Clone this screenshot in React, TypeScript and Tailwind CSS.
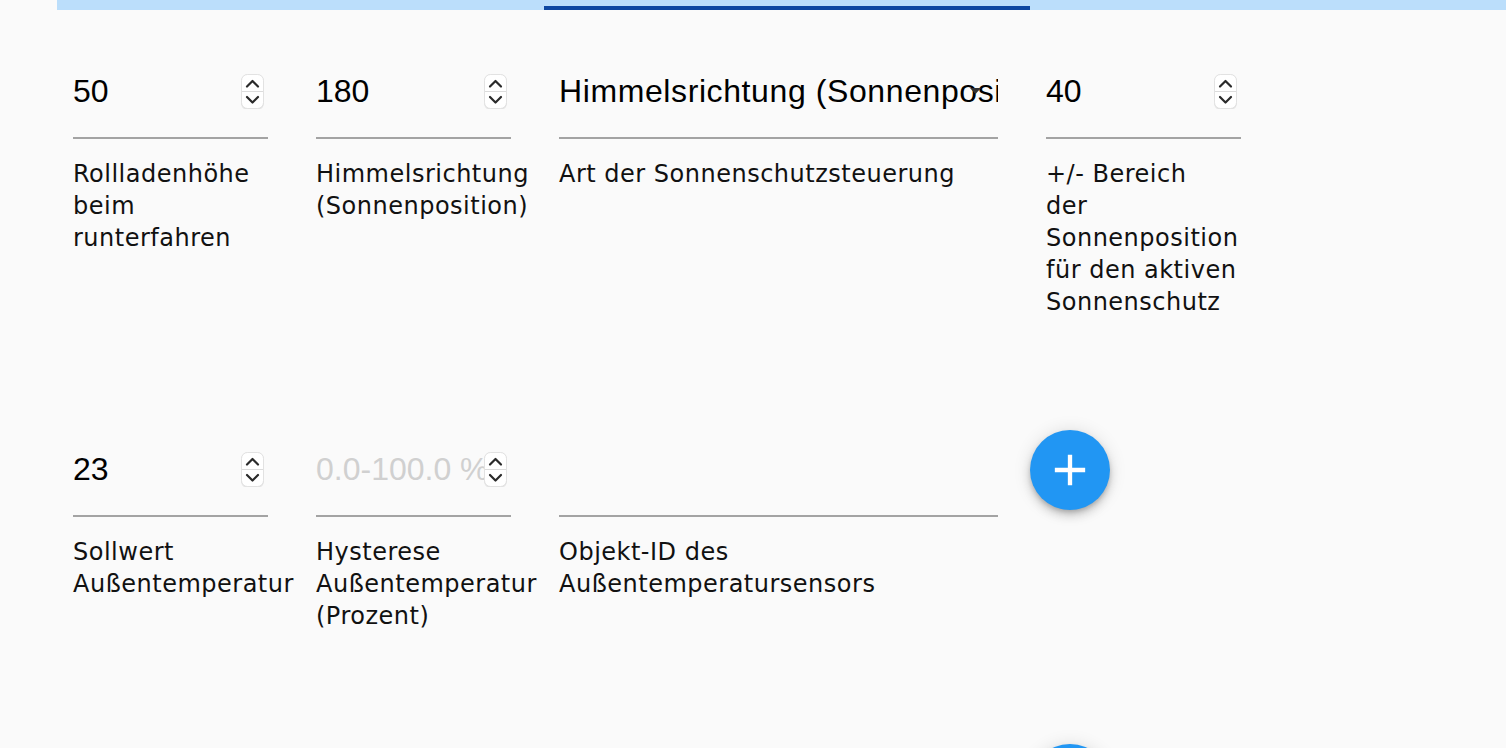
import React from "react";

const labelFont = { fontFamily: '"DejaVu Sans", Verdana, sans-serif' };
const inputFont = { fontFamily: '"Liberation Sans", Arial, sans-serif' };

function Spinner() {
  return (
    <svg width="23" height="35" viewBox="0 0 23 35" className="mr-[4px] shrink-0">
      <defs>
        <filter id="sh" x="-20%" y="-20%" width="140%" height="140%">
          <feDropShadow dx="0" dy="0.5" stdDeviation="0.7" floodColor="#000" floodOpacity="0.25" />
        </filter>
      </defs>
      <rect x="0.5" y="0.5" width="22" height="34" rx="6" fill="#ffffff" stroke="#e2e2e2" filter="url(#sh)" />
      <line x1="1" y1="17.5" x2="22" y2="17.5" stroke="#dcdcdc" strokeWidth="1" />
      <polyline points="6,12.5 11.5,7 17,12.5" fill="none" stroke="#2a2a2a" strokeWidth="2.2" strokeLinecap="round" strokeLinejoin="round" />
      <polyline points="6,23 11.5,28.5 17,23" fill="none" stroke="#2a2a2a" strokeWidth="2.2" strokeLinecap="round" strokeLinejoin="round" />
    </svg>
  );
}

function Label({ lines }: { lines: string[] }) {
  return (
    <div className="mt-[19px] text-[24px] leading-[32px] tracking-[0.5px] text-[#111111]" style={labelFont}>
      {lines.map((l, i) => (
        <div key={i} className="whitespace-nowrap">
          {l}
        </div>
      ))}
    </div>
  );
}

function NumberField({ value, placeholder, label }: { value?: string; placeholder?: string; label: string[] }) {
  return (
    <div className="pl-[16px] pr-[32px]">
      <div className="border-b-2 border-[#a3a3a3] pb-[27px] pt-[20px]">
        <div className="flex h-[38px] items-center">
          <span
            className={
              "min-w-0 flex-1 overflow-hidden whitespace-nowrap text-[32px] leading-[38px] " +
              (value ? "text-black" : "text-[#d0d0d0]")
            }
            style={inputFont}
          >
            {value ?? placeholder}
          </span>
          <Spinner />
        </div>
      </div>
      <Label lines={label} />
    </div>
  );
}

function SelectField({ value, label }: { value: string; label: string[] }) {
  return (
    <div className="pl-[16px] pr-[32px]">
      <div className="border-b-2 border-[#a3a3a3] pb-[27px] pt-[20px]">
        <div className="relative flex h-[38px] items-center">
          <span
            className="min-w-0 flex-1 overflow-hidden whitespace-nowrap text-[32px] leading-[38px] tracking-[0.6px] text-black"
            style={inputFont}
          >
            {value}
          </span>
          <svg width="11" height="6" viewBox="0 0 11 6" className="absolute right-[17px] top-[16px]">
            <polygon points="0,0 11,0 5.5,6" fill="#333333" />
          </svg>
        </div>
      </div>
      <Label lines={label} />
    </div>
  );
}

function TextField({ label }: { label: string[] }) {
  return (
    <div className="pl-[16px] pr-[32px]">
      <div className="border-b-2 border-[#a3a3a3] pb-[27px] pt-[20px]">
        <div className="h-[38px]" />
      </div>
      <Label lines={label} />
    </div>
  );
}

function Fab() {
  return (
    <button
      type="button"
      className="flex h-[80px] w-[80px] items-center justify-center rounded-full bg-[#2196f3] shadow-[0_3px_5px_-1px_rgba(0,0,0,0.2),0_6px_10px_0_rgba(0,0,0,0.14),0_1px_18px_0_rgba(0,0,0,0.12)]"
    >
      <svg width="52" height="52" viewBox="0 0 24 24">
        <path d="M19 13h-6v6h-2v-6H5v-2h6V5h2v6h6v2z" fill="#ffffff" />
      </svg>
    </button>
  );
}

export default function App() {
  return (
    <div className="h-[748px] w-full overflow-hidden bg-[#fafafa]">
      <div className="ml-[57px] flex h-[10px] items-end bg-[#bbdefb]">
        <div className="w-[487px]" />
        <div className="h-[4px] w-[486px] bg-[#0d47a1]" />
      </div>
      <div className="pl-[57px] pt-[42px]">
        <div className="grid grid-cols-[243px_243px_487px_243px] items-start gap-y-[112px]">
          <NumberField value="50" label={["Rollladenhöhe", "beim", "runterfahren"]} />
          <NumberField value="180" label={["Himmelsrichtung", "(Sonnenposition)"]} />
          <SelectField value="Himmelsrichtung (Sonnenposition)" label={["Art der Sonnenschutzsteuerung"]} />
          <NumberField
            value="40"
            label={["+/- Bereich", "der", "Sonnenposition", "für den aktiven", "Sonnenschutz"]}
          />

          <NumberField value="23" label={["Sollwert", "Außentemperatur"]} />
          <NumberField placeholder="0.0-100.0 %" label={["Hysterese", "Außentemperatur", "(Prozent)"]} />
          <TextField label={["Objekt-ID des", "Außentemperatursensors"]} />
          <div>
            <Fab />
          </div>

          <div className="col-start-4">
            <Fab />
          </div>
        </div>
      </div>
    </div>
  );
}
